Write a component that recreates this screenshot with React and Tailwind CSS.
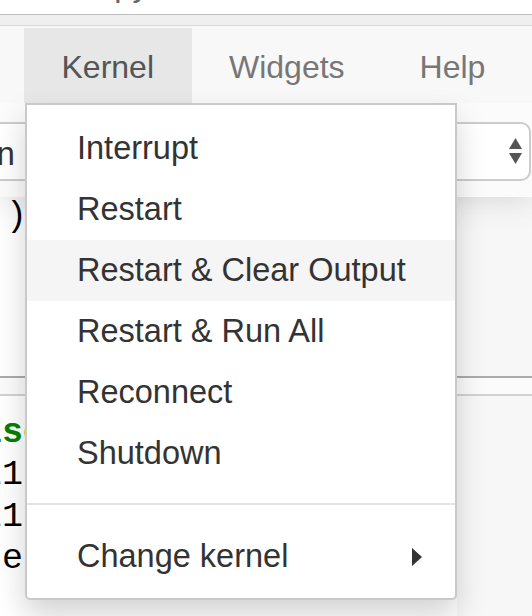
import React from 'react';

const ITEMS = ['Interrupt', 'Restart', 'Restart & Clear Output', 'Restart & Run All', 'Reconnect', 'Shutdown'];

const CODE = [
  { text: ' False', kw: true },
  { text: 'pool1' },
  { text: 'pool1' },
  { text: 'space' },
];

function KernelMenu() {
  return (
    <div className="absolute z-20 left-[25px] top-[103px] w-[432px] bg-white border-2 border-[#c9c9c9] rounded-b-[5px] shadow-[0_15px_30px_rgba(0,0,0,0.175)] pt-[13px] pb-[11px] text-[32.5px] text-[#333]">
      {ITEMS.map((label, i) => (
        <div
          key={label}
          className={`h-[61px] flex items-center pl-[50px] whitespace-nowrap ${i === 2 ? 'bg-[#f5f5f5]' : ''}`}
        >
          {label}
        </div>
      ))}
      <div className="h-[2px] bg-[#e5e5e5] mt-[19px] mb-[21px]" />
      <div className="h-[61px] flex items-center justify-between pl-[50px] pr-[33px]">
        <span>Change kernel</span>
        <svg width="10" height="18" viewBox="0 0 10 18">
          <polygon points="0,0 10,9 0,18" fill="#333" />
        </svg>
      </div>
    </div>
  );
}

export default function App() {
  return (
    <div className="relative w-[532px] h-[616px] overflow-hidden bg-white flex flex-col font-['Liberation_Sans',Arial,sans-serif]">
      {/* header */}
      <div className="relative z-10 bg-white shadow-[0_0_30px_2px_rgba(87,87,87,0.2)]">
        <div className="h-[14px] overflow-hidden">
          <div className="ml-[80px] mt-[-31px] text-[32.5px] leading-none text-[#666]">Jupyter</div>
        </div>
        <div className="h-px bg-[#bdbdbd]" />
        <div className="h-[10px] bg-[#efefef]" />
        <div className="h-px bg-[#d9d9d9]" />
        <div className="h-[77px] bg-[#f8f8f8] flex items-end pl-[24px] text-[32px] text-[#777]">
          <div className="h-[75px] px-[37.5px] pt-[3px] flex items-center bg-[#e7e7e7] text-[#555]">Kernel</div>
          <div className="h-[75px] px-[37.5px] pt-[3px] flex items-center">Widgets</div>
          <div className="h-[75px] px-[37.5px] pt-[3px] flex items-center">Help</div>
        </div>

        {/* toolbar */}
        <div className="h-[94px] bg-[#fbfbfb] pt-[19px]">
          <div className="ml-[-20px] w-[551px] h-[59px] bg-white border-2 border-[#cccccc] rounded-r-[10px] flex items-center justify-between pr-[6px] overflow-hidden">
            <span className="ml-[-117px] pt-[6px] text-[32.5px] text-[#333] whitespace-nowrap">Markdown</span>
            <svg width="14" height="27" viewBox="0 0 14 27">
              <polygon points="0,11 13,11 6.5,0" fill="#555" />
              <polygon points="0,15 13,15 6.5,26" fill="#555" />
            </svg>
          </div>
        </div>
      </div>

      {/* notebook */}
      <div className="flex-1 flex flex-col font-['Liberation_Mono','Courier_New',monospace] text-[35px] leading-[42px] text-black">
        <div className="h-[179px] flex">
          <div className="flex-1 bg-white overflow-hidden">
            <div className="ml-[-78px] mt-[-1px] whitespace-pre">{'    )'}</div>
          </div>
          <div className="w-[75px] bg-[#f7f7f7]" />
        </div>
        <div className="h-[2px] bg-[#ababab]" />
        <div className="h-[16px] bg-[#fbfbfb]" />
        <div className="h-[2px] bg-[#d2d2d2]" />
        <div className="flex-1 flex">
          <div className="flex-1 bg-white overflow-hidden pt-[16px]">
            {CODE.map((line, i) => (
              <div
                key={i}
                className={`ml-[-82px] whitespace-pre ${line.kw ? 'text-[#008000] font-bold' : ''}`}
              >
                {line.text}
              </div>
            ))}
          </div>
          <div className="w-[75px] bg-[#f7f7f7]" />
        </div>
      </div>

      <KernelMenu />
    </div>
  );
}
